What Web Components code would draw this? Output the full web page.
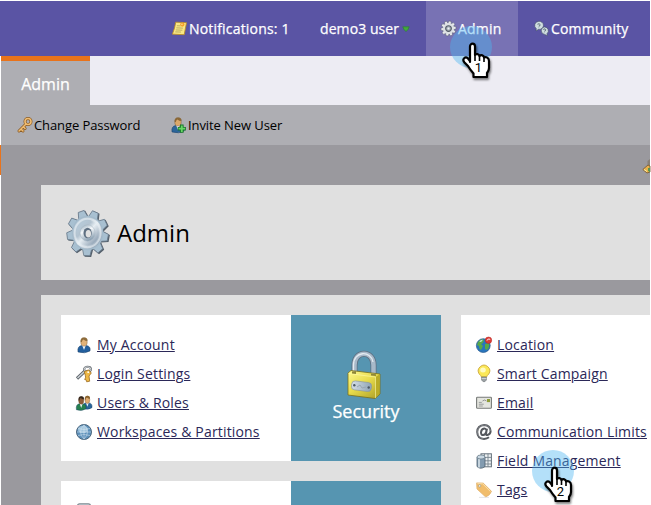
<!DOCTYPE html>
<html lang="en">
<head>
<meta charset="utf-8">
<title>Admin</title>
<style>
html,body{margin:0;height:100%;overflow:hidden;background:#fff}
body{font-family:"Open Sans","Noto Sans",sans-serif}
</style>
</head>
<body>
<admin-app></admin-app>
<script>
const gearTeeth = (n, start, inner, outer, w) => Array.from({length:n}, (_, i) =>
  `<path d="M${-w} ${-inner}L${-w*.62} ${-outer}H${w*.62}L${w} ${-inner}z" transform="rotate(${start + i*360/n})"/>`).join('');

const person = (skin, hair, coat) => `<path d="M2 15Q1 9 6 8.5h4Q15 9 14 14Q9 17 2 15z" fill="${coat}" stroke="#153a62" stroke-width=".5"/><path d="M6 8l2 5 2-5z" fill="#eef3f7"/><ellipse cx="8" cy="5" rx="3.2" ry="4.1" fill="${skin}" stroke="#6b4c25" stroke-width=".4"/><path d="M4.7 5Q4 .5 8 .4T11.4 4Q9 4 7.5 2.5 6 3 5.8 5z" fill="${hair}"/>`;
const key = (metal, edge) => `<g fill="none" stroke-linecap="round"><circle cx="11" cy="4.5" r="3" stroke="${edge}" stroke-width="3"/><path d="M9 7L2 14M4 12l2 2M6.4 9.8l1.7 1.7" stroke="${edge}" stroke-width="3"/><circle cx="11" cy="4.5" r="3" stroke="${metal}" stroke-width="1.6"/><path d="M9 7L2 14M4 12l2 2M6.4 9.8l1.7 1.7" stroke="${metal}" stroke-width="1.5"/></g>`;

const ICONS = {
  note: ['0 0 16 16', `<path d="M4 1.2L15.5 1.8 13 14.6 .4 14Q3 8 4 1.2z" fill="#f9e784" stroke="#b98b24" stroke-width=".9"/><path d="M5.2 5l4 .2M4.6 7.3l7 .3M4 9.5l7 .3M3.5 11.6l6 .2" stroke="#a89a55" stroke-width=".8"/><circle cx="11" cy="3.8" r="2.3" fill="#f6a12b"/><circle cx="10.6" cy="3.4" r=".8" fill="#ffe29a"/>`],
  arrow: ['0 0 8 6', `<path d="M.8.8h6.4Q6.5 3.8 4 5.6 1.5 3.8.8.8z" fill="#43aa38" stroke="#2e8038" stroke-width=".7"/>`],
  gearSmall: ['0 0 16 16', `<g transform="translate(8 8)"><g fill="#e8eaec" stroke="#555a70" stroke-width=".5">${gearTeeth(10, 12, 4.4, 8, 2)}</g><circle r="5.9" fill="#dde1e4"/><circle r="3" fill="#aab4bd" stroke="#545b68" stroke-width="1.2"/><circle r="1.1" fill="#f1f3f4"/></g>`],
  chat: ['0 0 16 16', `<g fill="#cfdde0" stroke="#3e4b63" stroke-width=".6"><path d="M4.8 .4a4.6 4.3 0 1 1 0 8.5L2.2 10.6l.2-2.6A4.6 4.3 0 0 1 4.8 .4z"/><path d="M11 6.3a4.4 4.1 0 0 1 2.8 7.2l.5 2.3-2.8-1.5A4.4 4.1 0 0 1 11 6.3z"/></g><path d="M3.7 3.5Q6.3 2 6.4 4T5 5.5M5 7v.3M9.8 9Q12.4 7.6 12.4 9.3T11 11M11 12.4v.3" fill="none" stroke="#4d6068" stroke-width=".9"/>`],
  key: ['0 0 16 16', key('#f0bd72', '#8a5b26')],
  invite: ['0 0 16 16', `<g transform="translate(-1 0)">${person('#dba96b', '#8b6837', '#2c659a')}</g><path d="M10.8 7.6v8.2M6.7 11.7h8.2" stroke="#17762a" stroke-width="3.6"/><path d="M10.8 8.4v6.6M7.5 11.7h6.6" stroke="#67d765" stroke-width="1.8"/>`],
  person: ['0 0 16 16', person('#e2b278', '#8d6c3c', '#225f9e')],
  keys: ['0 0 16 16', `<path d="M1 12.5L9 5" stroke="#5c6269" stroke-width="3.2"/><path d="M1.5 12L9 5" stroke="#cbd1d5" stroke-width="1.6"/><ellipse cx="11.5" cy="3.2" rx="3.4" ry="2.4" fill="none" stroke="#5f656b" stroke-width="2.1"/><ellipse cx="11.5" cy="3.2" rx="3.4" ry="2.4" fill="none" stroke="#d4d9dc" stroke-width="1"/><path d="M8.2 5.5l4.5-1.6 2.6 3.1-2.3 3 .7 5.2-3 .6-.6-2-1.5-.4 1-1.5-.2-2.2z" fill="#efb945" stroke="#9b6a20" stroke-width=".8"/><circle cx="12.2" cy="6.2" r=".9" fill="#fff"/>`],
  users: ['0 0 16 16', `<g transform="translate(5.3 .4) scale(.76 .88)">${person('#dfaa70', '#8c652f', '#29669b')}</g><g transform="translate(-1.2 .8) scale(.8 .93)">${person('#8c5b38', '#36281d', '#26804f')}</g>`],
  globe: ['0 0 16 16', `<circle cx="8" cy="8" r="7.5" fill="#5b8fb9" stroke="#4c677e" stroke-width="1"/><ellipse cx="7" cy="5.5" rx="5" ry="3.8" fill="#bcd9eb" opacity=".7"/><path d="M8 .8v14.4M1 8h14M2 4.5q6 2 12 0M2 11.5q6-2 12 0M8 .8q-7 7.2 0 14.4M8 .8q7 7.2 0 14.4" fill="none" stroke="#dcebf4" stroke-width=".5"/>`],
  earth: ['0 0 16 16', `<circle cx="7.3" cy="8.6" r="6.9" fill="#2875bd" stroke="#26568a" stroke-width=".7"/><path d="M2 5q3-4 6-2L7 6 5 7l2 2-2 4Q3 12 3 9L1 8zM9 7l4-1q1 4-2 7l-2-1z" fill="#58a947"/><path d="M3.2 4.6Q5 2.4 7 2.7L5 5z" fill="#c4e5d8"/><circle cx="12.5" cy="3.2" r="3.2" fill="#df3c35" stroke="#ae201e" stroke-width=".5"/><path d="M11 3.6l1.2-1.6 2 .3" fill="none" stroke="#fff" stroke-width=".9"/>`],
  bulb: ['0 0 16 16', `<path d="M5.5 11Q5 9.5 3.2 8A5.7 5.7 0 1 1 12.8 8Q11 9.5 10.5 11z" fill="#fbe858" stroke="#c6a02e" stroke-width=".8"/><ellipse cx="7" cy="4" rx="2.8" ry="2.5" fill="#fffbc3"/><path d="M5.6 11h4.8v3L9 15.6H7L5.6 14z" fill="#9ba1a4" stroke="#666d70" stroke-width=".6"/><path d="M5.7 12.5h4.6" stroke="#e4e6e6" stroke-width=".7"/>`],
  mail: ['0 0 16 16', `<rect x=".6" y="2.2" width="14.8" height="11" rx=".8" fill="#e4e5df" stroke="#777a78" stroke-width="1.1"/><path d="M2.8 7.4h3M2.8 9.2h5M2.8 11h4" stroke="#888c8b" stroke-width=".8"/><rect x="11" y="4" width="3" height="3.1" fill="#8f9d37"/><path d="M6.5 6q2-2 4 0" fill="none" stroke="#777" stroke-width=".7"/>`],
  at: ['0 0 16 16', `<path d="M11 4.6L10 9.6Q9.8 11.3 11.4 11 14.6 10 14.6 7.2 14.3 1.2 8.2 1 1.4 1.3 1.2 8 1.5 14.8 8 14.9 11 14.8 13 13.3M10.5 6.5Q10 4.5 8.2 4.6 5.2 5 5 8.5 5.1 11.2 7.2 11.1 9.5 10.8 10.3 7.8" fill="none" stroke="#55585d" stroke-width="2"/><path d="M14.4 7Q13.9 1.5 8.2 1.1 1.6 1.4 1.4 8 1.8 14 7.5 14.7" fill="none" stroke="#a5a9ad" stroke-width=".5"/>`],
  db: ['0 0 16 16', `<rect x="5" y=".8" width="10.4" height="13" fill="#edf1f3" stroke="#65717b"/><path d="M5 4.4h10.4M5 7.8h10.4M5 11h10.4M8.5.8v13M12 .8v13" stroke="#76838d" stroke-width=".9"/><path d="M1 4v9.5q3.6 3.5 8 0V4z" fill="#829bb0" stroke="#4f616f" stroke-width=".8"/><path d="M3 5v9.5" stroke="#dbe6ed" stroke-width="1.5"/><ellipse cx="5" cy="4" rx="4" ry="2" fill="#c9d8e3" stroke="#637582" stroke-width=".7"/>`],
  tag: ['0 0 16 16', `<path d="M.6.9L7.2 1.1 15.5 9.3Q14 13.5 9.7 15L1 7z" fill="#f1bd6b" stroke="#e2b36d" stroke-width=".8"/><path d="M1.5 1.6l5.2.2 7.8 7.8" stroke="#fae0a9" fill="none"/><circle cx="3.7" cy="3.9" r="1.2" fill="#fff" stroke="#a39a82" stroke-width=".8"/><path d="M3 15.4h10" stroke="#ddd" stroke-width=".8"/>`],
  doc: ['0 0 16 16', `<rect x="1.5" y=".8" width="13" height="15" rx="2" fill="#dbe7ed" stroke="#7e8991" stroke-width="1.2"/><path d="M3.5 3h9" stroke="#a9b9c3"/>`],
  gear: ['0 0 44 50', `<defs><linearGradient id="a" x1="0" y1="0" x2="1" y2="1"><stop stop-color="#b9cedd"/><stop offset=".35" stop-color="#b3c3d0"/><stop offset=".5" stop-color="#e6edf2"/><stop offset="1" stop-color="#7389a0"/></linearGradient><linearGradient id="b" x1="0" y1="0" x2=".4" y2="1"><stop stop-color="#8ca3b5"/><stop offset=".45" stop-color="#f6f9fb"/><stop offset="1" stop-color="#8da2b4"/></linearGradient></defs><g transform="translate(21.6 25) scale(.94 1.03)"><g fill="#535e69" transform="translate(1.1 .8)">${gearTeeth(9, -18, 14, 22.4, 5.6)}</g><g fill="#a8c0d1" stroke="#68798a" stroke-width=".8">${gearTeeth(9, -18, 14, 22, 5.3)}</g><circle r="16.8" fill="#a3bacb"/><circle r="15.4" fill="url(#a)"/><circle r="13.8" fill="none" stroke="#e9f0f5" stroke-width="2" opacity=".6"/><circle r="11.8" fill="url(#a)"/><circle r="8" fill="url(#b)" stroke="#a7b5c1" stroke-width=".5"/><ellipse rx="4.4" ry="5.1" fill="#5f7082"/><ellipse cx=".8" cy=".7" rx="2.9" ry="3.7" fill="#e0e0e0"/></g>`],
  lock: ['0 0 34 48', `<defs><linearGradient id="y" x2=".8" y2="1"><stop stop-color="#fffb90"/><stop offset=".5" stop-color="#e8dc4d"/><stop offset="1" stop-color="#b5a72a"/></linearGradient><linearGradient id="s"><stop stop-color="#d5dee6"/><stop offset="1" stop-color="#8ea3b5"/></linearGradient></defs><path d="M7.5 24V14C7.5-1 26.5-1 26.5 14V24" fill="none" stroke="#5d6f80" stroke-width="6"/><path d="M7.5 24V14C7.5-1 26.5-1 26.5 14V24" fill="none" stroke="#a8b9c9" stroke-width="4.5"/><path d="M6.5 23V14C6.5 0 24-1 26 11" fill="none" stroke="#e4ebf1" stroke-width="1.3"/><path d="M1 22L4 19.5 33 23V43L28 47.5 1 44z" fill="url(#y)" stroke="#786f1b" stroke-width=".8"/><path d="M28.5 26L32.5 23.5V43L28.5 47z" fill="#b9ac28"/><path d="M1.5 22.5L28.5 26V47" fill="none" stroke="#fffcac" stroke-width=".6"/><path d="M5 20.5l4-.5v3l-4-.4zM24 22.5l5 .7v1.7l-5-.5z" fill="#8f8739"/><rect x="4.5" y="30.7" width="20" height="9" rx="3.5" transform="rotate(7 14.5 35)" fill="url(#s)" stroke="#8593a0" stroke-width=".6"/><circle cx="7.3" cy="34.2" r="1.2" fill="#4d5964"/><circle cx="21.7" cy="36.5" r="1.2" fill="#4d5964"/><path d="M10 36l3-2 2 3 4-1" fill="none" stroke="#99a6b2"/>`],
  hand: ['0 0 30 38', `<path d="M8 20V4.5C8 .8 13 .8 13 4.5V13C14 11.5 17 12 17.5 14 19 12.6 22 13.2 22 15.5 24 14.5 27 15.6 27 19V26Q27 28.5 25 31V35H11.5V31.5Q8 27.5 6 24L2.5 20.5C-.5 17 3.4 14 6 16.5L8 19z" fill="#fff" stroke="#000" stroke-width="2.2" stroke-linejoin="round"/><path d="M13 12v7M17.5 14v5M22 16v4" stroke="#000" stroke-width="1.6"/>`],
  brush: ['0 0 8 16', `<path d="M8 1L5.5 3v4.5L8 9z" fill="#888077"/><path d="M6 7L.8 11.5 5 15 8 14V8z" fill="#e8b14c" stroke="#75562f" stroke-width=".8"/><path d="M2 11.5l3 2" stroke="#fff0a0"/><path d="M6 10h2v4l-2-1z" fill="#579453"/>`]
};

const define = (tag, css, html) => customElements.define(tag, class extends HTMLElement {
  constructor() {
    super();
    this.attachShadow({mode:'open'}).innerHTML = `<style>*{box-sizing:border-box}:host{box-sizing:border-box}${css}</style>${html}`;
  }
});

customElements.define('ui-icon', class extends HTMLElement {
  connectedCallback() {
    const [box, art] = ICONS[this.getAttribute('name')];
    if (!this.shadowRoot) this.attachShadow({mode:'open'});
    this.shadowRoot.innerHTML = `<style>:host{display:block;flex:none;width:16px;height:16px}svg{display:block;width:100%;height:100%;overflow:visible}</style><svg viewBox="${box}" aria-hidden="true">${art}</svg>`;
  }
});

define('nav-item', `:host{display:flex;align-items:center;height:55px;padding-left:15px;color:#fff;font-size:14px;line-height:20px;letter-spacing:.18px;-webkit-text-stroke:.25px #fff;white-space:nowrap;flex:none}`, `<slot></slot>`);

define('top-bar', `:host{display:flex;justify-content:flex-end;height:55px;background:#5a54a4;padding-right:4px}
nav-item ui-icon{margin-right:2px;width:15px;height:15px}.note{width:149px}.user{width:121px;letter-spacing:.08px}.active{width:92px;background:#7872b4}.com{width:128px;padding-left:16px}
nav-item.user ui-icon{width:8px;height:6px;margin:0 0 0 3px}`,
`<nav-item class="note"><ui-icon name="note" style="margin-left:1px"></ui-icon><span>Notifications: 1</span></nav-item>
<nav-item class="user"><span>demo3 user</span><ui-icon name="arrow"></ui-icon></nav-item>
<nav-item class="active"><ui-icon name="gearSmall"></ui-icon><span>Admin</span></nav-item>
<nav-item class="com"><ui-icon name="chat"></ui-icon><span>Community</span></nav-item>`);

define('tab-strip', `:host{display:flex;height:49px;background:#edecf3}.tab{width:89px;border-top:5px solid #e9731b;background:#aeaeb3;color:#fff;font-size:16px;line-height:46px;text-align:center;-webkit-text-stroke:.25px #fff}`, `<div class="tab"><slot></slot></div>`);

define('tool-bar', `:host{display:flex;height:40px;background:#aeaeb3;align-items:center;padding-left:16px;font-size:13px;letter-spacing:-.09px;color:#000;white-space:nowrap}.b{display:flex;align-items:center;gap:1px}.b:first-of-type{width:154px}`,
`<div class="b"><ui-icon name="key"></ui-icon><span>Change Password</span></div><div class="b"><ui-icon name="invite"></ui-icon><span>Invite New User</span></div>`);

define('page-title', `:host{display:flex;flex:none;align-items:center;height:95px;background:#e0e0e0;padding-left:25px;font-size:24px;gap:7px;color:#000}ui-icon{width:44px;height:50px}`, `<ui-icon name="gear"></ui-icon><span><slot></slot></span>`);

define('link-row', `:host{display:flex;align-items:center;height:29px;gap:5px;font-size:14px;line-height:20px;letter-spacing:.17px;color:#2b2858;white-space:nowrap}a{text-decoration:underline;text-underline-offset:1px;text-decoration-thickness:1px}`, `<slot name="icon"></slot><a><slot></slot></a>`);

define('link-card', `:host{display:flex;background:#fff}.links{width:230px;padding:15px 0 0 15px;flex:none}`, `<div class="links"><slot></slot></div><slot name="tile"></slot>`);

define('card-tile', `:host{display:flex;flex-direction:column;align-items:center;width:150px;background:#5695b1;padding-top:36px;color:#fff;font-size:18px;line-height:24px;-webkit-text-stroke:.25px #fff;flex:none}`, `<slot></slot>`);

define('click-marker', `:host{position:absolute;width:42px;height:42px;border-radius:50%;background:rgba(76,181,240,.42)}.h{position:absolute;left:12px;top:16px;width:30px;height:38px;filter:drop-shadow(1px 2px 1px rgba(0,0,0,.5))}.n{position:absolute;left:22px;top:34px;width:13px;text-align:center;font:13px/16px Roboto,sans-serif;color:#000}`, `<ui-icon class="h" name="hand"></ui-icon><span class="n"><slot></slot></span>`);

const row = (icon, text) => `<link-row><ui-icon slot="icon" name="${icon}"></ui-icon>${text}</link-row>`;

define('admin-app', `:host{display:block;position:relative;width:651px;height:505px;padding:1px 1px 0 0;overflow:hidden;background:#fff}
.inner{margin-left:1px}
.body{display:flex;flex-direction:column;gap:15px;height:360px;background:#9a999e;padding:40px 0 0 40px;overflow:hidden}
.cards{display:grid;grid-template-columns:380px 380px;grid-auto-rows:146px;gap:20px;padding:20px;background:#e0e0e0;width:609px;overflow:hidden;height:250px;flex:none}
.tall{grid-row:span 2}
.edge{position:absolute;left:0;top:145px;width:1px;height:30px;background:#e9731b}
.brush{position:absolute;left:642px;top:158px;width:8px;height:16px}`,
`<top-bar></top-bar>
<div class="inner"><tab-strip>Admin</tab-strip><tool-bar></tool-bar>
<div class="body"><page-title>Admin</page-title>
<div class="cards">
<link-card>${row('person','My Account')}${row('keys','Login Settings')}${row('users','Users &amp; Roles')}${row('globe','Workspaces &amp; Partitions')}<card-tile slot="tile"><ui-icon name="lock" style="width:34px;height:48px;margin-left:-4px"></ui-icon><span>Security</span></card-tile></link-card>
<link-card class="tall">${row('earth','Location')}${row('bulb','Smart Campaign')}${row('mail','Email')}${row('at','Communication Limits')}${row('db','Field Management')}${row('tag','Tags')}</link-card>
<link-card>${row('doc','')}<card-tile slot="tile"></card-tile></link-card>
</div></div></div>
<div class="edge"></div><ui-icon class="brush" name="brush"></ui-icon>
<click-marker style="left:450px;top:26px">1</click-marker>
<click-marker style="left:532px;top:450px">2</click-marker>`);
</script>
</body>
</html>
